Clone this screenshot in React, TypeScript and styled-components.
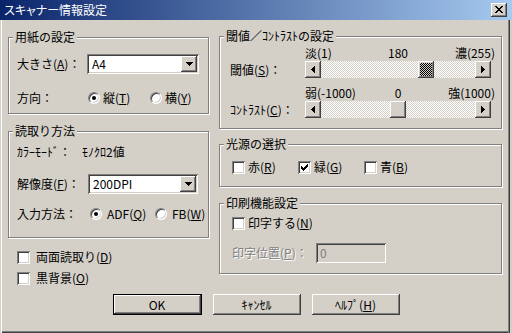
import styled, { createGlobalStyle, css } from 'styled-components';

const GlobalStyle = createGlobalStyle`
  html, body {
    margin: 0;
    padding: 0;
    background: #d4d0c8;
  }
  body {
    font-family: "Noto Sans CJK JP", "Noto Sans", sans-serif;
    font-size: 12px;
    line-height: 14px;
    color: #000;
  }
  * {
    box-sizing: border-box;
  }
`;

const raised = css`
    background-color: #d4d0c8;
    box-shadow: inset -1px -1px 0 #404040, inset 1px 1px 0 #ffffff, inset -2px -2px 0 #808080, inset 2px 2px 0 #d4d0c8;
`;

const sunken = css`
    box-shadow: inset 1px 1px 0 #808080, inset -1px -1px 0 #ffffff, inset 2px 2px 0 #404040, inset -2px -2px 0 #d4d0c8;
`;

const dither = (a: string, b: string) => css`
    background-image: repeating-conic-gradient(${a} 0 25%, ${b} 0 50%);
    background-size: 2px 2px;
`;

const Window = styled.div`
    width: 512px;
    height: 333px;
    background: #d4d0c8;
    box-shadow: inset 1px 0 0 #d4d0c8, inset 2px 0 0 #ffffff, inset -2px 0 0 #d4d0c8, inset -3px 0 0 #404040,
        inset -4px 0 0 #808080, inset 0 -1px 0 #404040, inset 0 -2px 0 #808080;
    overflow: hidden;
`;

const TitleBar = styled.div`
    height: 20px;
    display: flex;
    align-items: center;
    justify-content: space-between;
    padding: 0 5px 0 4px;
    background: linear-gradient(to right, #0a246a, #a6caf0);
`;

const Title = styled.span`
    color: #ffffff;
    font-feature-settings: 'palt';
`;

const CloseButton = styled.div`
    width: 16px;
    height: 14px;
    ${raised};
    display: flex;
    align-items: center;
    justify-content: center;
    padding-bottom: 1px;
`;

const Body = styled.div`
    display: flex;
    flex-direction: column;
    padding-left: 8px;
`;

const Columns = styled.div`
    display: flex;
    gap: 10px;
`;

const Column = styled.div<{ $w: number; $top: number }>`
    width: ${(p) => p.$w}px;
    padding-top: ${(p) => p.$top}px;
    display: flex;
    flex-direction: column;
`;

const Group = styled.div<{ $h: number; $mt?: number; $pl: number }>`
    height: ${(p) => p.$h}px;
    margin-top: ${(p) => p.$mt ?? 0}px;
    padding-left: ${(p) => p.$pl}px;
    border: 1px solid #808080;
    box-shadow: 1px 1px 0 #ffffff, inset 1px 1px 0 #ffffff;
    display: flex;
    flex-direction: column;
`;

const Legend = styled.div<{ $pl: number }>`
    margin: -8px 0 0 ${(p) => 4 - p.$pl}px;
    padding: 0 2px;
    width: fit-content;
    background: #d4d0c8;
    line-height: 14px;
`;

const Row = styled.div<{ $mt: number; $h: number }>`
    margin-top: ${(p) => p.$mt}px;
    height: ${(p) => p.$h}px;
    display: flex;
    align-items: center;
`;

const Label = styled.span<{ $w: number; $disabled?: boolean }>`
    width: ${(p) => p.$w}px;
    flex: none;
    white-space: nowrap;
    ${(p) =>
        p.$disabled &&
        css`
            color: #808080;
            text-shadow: 1px 1px 0 #ffffff;
        `}
`;

const U = styled.span`
    text-decoration: underline;
    text-underline-offset: 1px;
`;

const ComboBox = styled.div<{ $w: number }>`
    width: ${(p) => p.$w}px;
    height: 20px;
    background: #ffffff;
    ${sunken};
    display: flex;
    align-items: center;
    justify-content: space-between;
    padding: 2px 2px 2px 5px;
`;

const DropButton = styled.div`
    width: 16px;
    height: 16px;
    ${raised};
    display: flex;
    align-items: center;
    justify-content: center;
`;

const TextField = styled.div`
    width: 70px;
    height: 20px;
    ${sunken};
    display: flex;
    align-items: center;
    padding-left: 4px;
    color: #808080;
`;

const Option = styled.label<{ $w?: number; $gap: number }>`
    width: ${(p) => (p.$w ? `${p.$w}px` : 'auto')};
    flex: none;
    display: flex;
    align-items: center;
    gap: ${(p) => p.$gap}px;
    white-space: nowrap;
`;

const RadioCircle = styled.span`
    width: 12px;
    height: 12px;
    border-radius: 50%;
    background: #ffffff;
    border: 1px solid;
    border-color: #808080 #ffffff #ffffff #808080;
    box-shadow: inset 1px 1px 0 #404040, inset -1px -1px 0 #d4d0c8;
    display: flex;
    align-items: center;
    justify-content: center;
`;

const RadioDot = styled.span`
    width: 4px;
    height: 4px;
    border-radius: 50%;
    background: #000;
`;

const CheckBox = styled.span`
    width: 13px;
    height: 13px;
    flex: none;
    background: #ffffff;
    ${sunken};
    display: flex;
    align-items: center;
    justify-content: center;
`;

const CheckList = styled.div`
    margin-top: 12px;
    padding-left: 9px;
    display: flex;
    flex-direction: column;
    gap: 7px;
`;

const SliderBlock = styled.div<{ $mt: number }>`
    margin-top: ${(p) => p.$mt}px;
    display: grid;
    grid-template-columns: 75px 186px;
    grid-template-rows: 14px 17px;
    row-gap: 1px;
`;

const SliderLabel = styled.span`
    grid-row: 2;
    grid-column: 1;
    align-self: center;
    white-space: nowrap;
`;

const Ticks = styled.div`
    grid-row: 1;
    grid-column: 2;
    display: grid;
    grid-template-columns: 1fr auto 1fr;
    white-space: nowrap;

    & > :first-child {
        justify-self: start;
    }
    & > :last-child {
        justify-self: end;
        margin-right: -4px;
    }
`;

const ScrollBar = styled.div`
    grid-row: 2;
    grid-column: 2;
    display: flex;
    height: 17px;
`;

const ArrowButton = styled.div`
    width: 16px;
    height: 17px;
    flex: none;
    ${raised};
    display: flex;
    align-items: center;
    justify-content: center;
`;

const Track = styled.div`
    flex: 1;
    display: flex;
    ${dither('#ffffff', '#d4d0c8')};
`;

const Thumb = styled.div<{ $focus?: boolean }>`
    width: 16px;
    height: 17px;
    flex: none;
    ${raised};
    ${(p) => p.$focus && dither('#000000', '#d4d0c8')};
`;

const ButtonRow = styled.div`
    margin: 9px 0 0 -8px;
    display: flex;
    justify-content: center;
    gap: 11px;
`;

const PushButton = styled.div<{ $default?: boolean }>`
    width: 88px;
    height: 21px;
    ${raised};
    display: flex;
    align-items: center;
    justify-content: center;
    ${(p) =>
        p.$default &&
        css`
            width: 89px;
            box-shadow: inset 0 0 0 1px #000, inset -2px -2px 0 #404040, inset 2px 2px 0 #ffffff, inset -3px -3px 0 #808080;
        `}
`;

const ArrowLeft = () => (
    <svg width="4" height="7" viewBox="0 0 4 7" shapeRendering="crispEdges">
        <path d="M0 3h1v1H0z M1 2h1v3H1z M2 1h1v5H2z M3 0h1v7H3z" fill="#000" />
    </svg>
);

const ArrowRight = () => (
    <svg width="4" height="7" viewBox="0 0 4 7" shapeRendering="crispEdges">
        <path d="M3 3h1v1H3z M2 2h1v3H2z M1 1h1v5H1z M0 0h1v7H0z" fill="#000" />
    </svg>
);

const ArrowDown = () => (
    <svg width="7" height="4" viewBox="0 0 7 4" shapeRendering="crispEdges">
        <path d="M0 0h7v1H0z M1 1h5v1H1z M2 2h3v1H2z M3 3h1v1H3z" fill="#000" />
    </svg>
);

const CloseGlyph = () => (
    <svg width="8" height="7" viewBox="0 0 8 7" shapeRendering="crispEdges">
        <path
            d="M0 0h2v1H0z M6 0h2v1H6z M1 1h2v1H1z M5 1h2v1H5z M2 2h4v1H2z M3 3h2v1H3z M2 4h4v1H2z M1 5h2v1H1z M5 5h2v1H5z M0 6h2v1H0z M6 6h2v1H6z"
            fill="#000"
        />
    </svg>
);

const CheckMark = () => (
    <svg width="7" height="7" viewBox="0 0 7 7" shapeRendering="crispEdges">
        <path d="M0 2h1v3H0z M1 3h1v3H1z M2 4h1v3H2z M3 3h1v3H3z M4 2h1v3H4z M5 1h1v3H5z M6 0h1v3H6z" fill="#000" />
    </svg>
);

const Radio = ({ checked, children, w, gap = 4 }: { checked?: boolean; children: React.ReactNode; w?: number; gap?: number }) => (
    <Option $w={w} $gap={gap}>
        <RadioCircle>{checked && <RadioDot />}</RadioCircle>
        <span>{children}</span>
    </Option>
);

const Check = ({ checked, children, w, gap = 3 }: { checked?: boolean; children: React.ReactNode; w?: number; gap?: number }) => (
    <Option $w={w} $gap={gap}>
        <CheckBox>{checked && <CheckMark />}</CheckBox>
        <span>{children}</span>
    </Option>
);

const Combo = ({ value, w }: { value: string; w: number }) => (
    <ComboBox $w={w}>
        <span>{value}</span>
        <DropButton>
            <ArrowDown />
        </DropButton>
    </ComboBox>
);

interface SliderProps {
    label: React.ReactNode;
    ticks: [string, string, string];
    value: number;
    min: number;
    max: number;
    focus?: boolean;
    mt: number;
}

const TRACK = 186 - 32;

const Slider = ({ label, ticks, value, min, max, focus, mt }: SliderProps) => {
    const offset = Math.round(((value - min) / (max - min)) * (TRACK - 16));
    return (
        <SliderBlock $mt={mt}>
            <Ticks>
                <span>{ticks[0]}</span>
                <span>{ticks[1]}</span>
                <span>{ticks[2]}</span>
            </Ticks>
            <SliderLabel>{label}</SliderLabel>
            <ScrollBar>
                <ArrowButton>
                    <ArrowLeft />
                </ArrowButton>
                <Track>
                    <Thumb $focus={focus} style={{ marginLeft: offset }} />
                </Track>
                <ArrowButton>
                    <ArrowRight />
                </ArrowButton>
            </ScrollBar>
        </SliderBlock>
    );
};

const App = () => {
    return (
        <Window>
            <GlobalStyle />
            <TitleBar>
                <Title>スキャナー情報設定</Title>
                <CloseButton>
                    <CloseGlyph />
                </CloseButton>
            </TitleBar>
            <Body>
                <Columns>
                    <Column $w={201} $top={17}>
                        <Group $h={77} $pl={8}>
                            <Legend $pl={8}>用紙の設定</Legend>
                            <Row $mt={10} $h={20}>
                                <Label $w={70}>
                                    大きさ(<U>A</U>)：
                                </Label>
                                <Combo value="A4" w={112} />
                            </Row>
                            <Row $mt={16} $h={16}>
                                <Label $w={71}>方向：</Label>
                                <Radio checked w={62} gap={3}>
                                    縦(<U>T</U>)
                                </Radio>
                                <Radio gap={3}>
                                    横(<U>Y</U>)
                                </Radio>
                            </Row>
                        </Group>
                        <Group $h={107} $mt={17} $pl={8}>
                            <Legend $pl={8}>読取り方法</Legend>
                            <Row $mt={7} $h={14}>
                                <Label $w={65}>ｶﾗｰﾓｰﾄﾞ：</Label>
                                <span>ﾓﾉｸﾛ2値</span>
                            </Row>
                            <Row $mt={15} $h={20}>
                                <Label $w={71}>
                                    解像度(<U>F</U>)：
                                </Label>
                                <Combo value="200DPI" w={110} />
                            </Row>
                            <Row $mt={12} $h={16}>
                                <Label $w={73}>入力方法：</Label>
                                <Radio checked w={65} gap={5}>
                                    ADF(<U>Q</U>)
                                </Radio>
                                <Radio gap={5}>
                                    FB(<U>W</U>)
                                </Radio>
                            </Row>
                        </Group>
                        <CheckList>
                            <Check gap={6}>
                                両面読取り(<U>D</U>)
                            </Check>
                            <Check gap={6}>
                                黒背景(<U>O</U>)
                            </Check>
                        </CheckList>
                    </Column>
                    <Column $w={283} $top={16}>
                        <Group $h={93} $pl={10}>
                            <Legend $pl={10}>閾値／ｺﾝﾄﾗｽﾄの設定</Legend>
                            <Slider
                                mt={3}
                                label={
                                    <>
                                        閾値(<U>S</U>)：
                                    </>
                                }
                                ticks={['淡(1)', '180', '濃(255)']}
                                value={180}
                                min={1}
                                max={255}
                                focus
                            />
                            <Slider
                                mt={8}
                                label={
                                    <>
                                        ｺﾝﾄﾗｽﾄ(<U>C</U>)：
                                    </>
                                }
                                ticks={['弱(-1000)', '0', '強(1000)']}
                                value={0}
                                min={-1000}
                                max={1000}
                            />
                        </Group>
                        <Group $h={43} $mt={15} $pl={12}>
                            <Legend $pl={12}>光源の選択</Legend>
                            <Row $mt={8} $h={16}>
                                <Check w={66}>
                                    赤(<U>R</U>)
                                </Check>
                                <Check checked w={66}>
                                    緑(<U>G</U>)
                                </Check>
                                <Check>
                                    青(<U>B</U>)
                                </Check>
                            </Row>
                        </Group>
                        <Group $h={71} $mt={16} $pl={12}>
                            <Legend $pl={12}>印刷機能設定</Legend>
                            <Row $mt={5} $h={16}>
                                <Check>
                                    印字する(<U>N</U>)
                                </Check>
                            </Row>
                            <Row $mt={12} $h={20}>
                                <Label $w={84} $disabled>
                                    印字位置(<U>P</U>)：
                                </Label>
                                <TextField>0</TextField>
                            </Row>
                        </Group>
                    </Column>
                </Columns>
                <ButtonRow>
                    <PushButton $default>OK</PushButton>
                    <PushButton>ｷｬﾝｾﾙ</PushButton>
                    <PushButton>
                        ﾍﾙﾌﾟ(<U>H</U>)
                    </PushButton>
                </ButtonRow>
            </Body>
        </Window>
    );
};

export default App;
